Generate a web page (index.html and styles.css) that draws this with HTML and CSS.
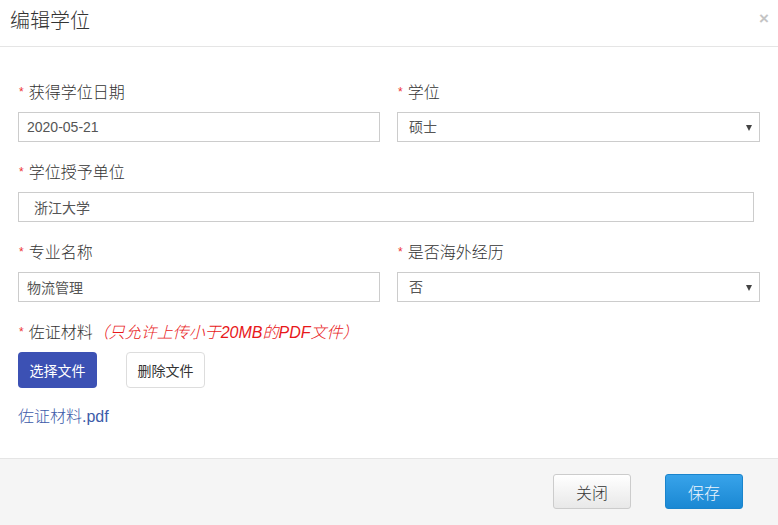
FILE: index.html
```html
<!DOCTYPE html>
<html lang="zh-CN">
<head>
    <meta charset="UTF-8">
    <title>编辑学位</title>
    <link rel="stylesheet" href="styles.css">
</head>
<body>
    <div class="modal">
        <div class="modal-header">
            <h3 class="modal-title">编辑学位</h3>
            <span class="close">&times;</span>
        </div>

        <div class="modal-body">
            <div class="row">
                <div class="field">
                    <label><span class="req">*</span>获得学位日期</label>
                    <input type="text" class="input" value="2020-05-21">
                </div>
                <div class="field">
                    <label><span class="req">*</span>学位</label>
                    <div class="select-wrap">
                        <select class="input select">
                            <option>硕士</option>
                            <option>学士</option>
                            <option>博士</option>
                        </select>
                    </div>
                </div>
            </div>

            <div class="field">
                <label><span class="req">*</span>学位授予单位</label>
                <input type="text" class="input wide" value="浙江大学">
            </div>

            <div class="row">
                <div class="field">
                    <label><span class="req">*</span>专业名称</label>
                    <input type="text" class="input" value="物流管理">
                </div>
                <div class="field">
                    <label><span class="req">*</span>是否海外经历</label>
                    <div class="select-wrap">
                        <select class="input select">
                            <option>否</option>
                            <option>是</option>
                        </select>
                    </div>
                </div>
            </div>

            <div class="field">
                <label><span class="req">*</span>佐证材料<span class="hint">（只允许上传小于20MB的PDF文件）</span></label>
                <div class="file-btns">
                    <button class="btn-choose">选择文件</button>
                    <button class="btn-delete">删除文件</button>
                </div>
            </div>

            <a class="file-link" href="#">佐证材料.pdf</a>
        </div>

        <div class="modal-footer">
            <button class="btn-close">关闭</button>
            <button class="btn-save">保存</button>
        </div>
    </div>
</body>
</html>
```

FILE: styles.css
```css
html, body {
    margin: 0;
    padding: 0;
    height: 525px;
    background-color: #fff;
    font-family: "Liberation Sans", "Noto Sans CJK SC", sans-serif;
    font-weight: 300;
    color: #333;
}
.modal {
    display: flex;
    flex-direction: column;
    height: 525px;
}
.modal-header {
    display: flex;
    justify-content: space-between;
    align-items: center;
    height: 46px;
    padding: 0 10px;
    border-bottom: 1px solid #e5e5e5;
}
.modal-title {
    margin: 0;
    font-size: 20px;
    font-weight: 300;
    line-height: 22px;
    color: #333;
    margin-top: -4px;
}
.close {
    color: #c4c4c4;
    font-size: 17px;
    font-weight: bold;
    margin-top: -8px;
    margin-right: -1px;
}
.modal-body {
    flex: 1;
    padding: 35px 18px 0 18px;
}
.row {
    display: grid;
    grid-template-columns: 362px 363px;
    column-gap: 17px;
}
.field {
    margin-bottom: 20px;
}
label {
    display: block;
    font-size: 16px;
    line-height: 20px;
    height: 20px;
    margin-bottom: 10px;
    color: #333;
    padding-left: 1px;
}
.req {
    color: #e33;
    font-size: 12px;
    margin-right: 5px;
    vertical-align: 2px;
}
.hint {
    color: #e8181a;
    font-style: italic;
}
.input {
    display: block;
    box-sizing: border-box;
    width: 100%;
    height: 30px;
    margin: 0;
    padding: 0 8px;
    border: 1px solid #ccc;
    background-color: #fff;
    color: #555;
    font-family: "Liberation Sans", "Noto Sans CJK SC", sans-serif;
    font-weight: 400;
    font-size: 14px;
    outline: none;
}
.input.wide {
    width: 736px;
    padding-left: 15px;
}
.select-wrap {
    position: relative;
}
.select {
    appearance: none;
    -webkit-appearance: none;
    padding-left: 11px;
    border-radius: 0;
}
.select-wrap::after {
    content: "";
    position: absolute;
    right: 8px;
    top: 13px;
    border-left: 3px solid transparent;
    border-right: 3px solid transparent;
    border-top: 6px solid #444;
}
.file-btns {
    display: flex;
    gap: 29px;
}
.btn-choose, .btn-delete {
    width: 79px;
    height: 36px;
    border-radius: 4px;
    font-family: "Liberation Sans", "Noto Sans CJK SC", sans-serif;
    font-weight: 400;
    font-size: 14px;
    cursor: pointer;
}
.btn-choose {
    background-color: #3c51b4;
    color: #fff;
    border: none;
}
.btn-delete {
    background-color: #fff;
    color: #333;
    border: 1px solid #ddd;
}
.file-link {
    display: inline-block;
    margin-top: -3px;
    font-size: 16px;
    line-height: 20px;
    color: #3d5ba9;
    text-decoration: none;
}
.modal-footer {
    display: flex;
    justify-content: flex-end;
    gap: 34px;
    padding: 15px 35px 16px 0;
    background-color: #f5f5f5;
    border-top: 1px solid #e5e5e5;
}
.btn-close, .btn-save {
    width: 78px;
    height: 35px;
    border-radius: 3px;
    font-family: "Liberation Sans", "Noto Sans CJK SC", sans-serif;
    font-weight: 300;
    font-size: 16px;
    cursor: pointer;
}
.btn-close {
    background: linear-gradient(#ffffff, #e8e8e8);
    border: 1px solid #ccc;
    color: #333;
}
.btn-save {
    background: linear-gradient(#38a3ea, #1a88d3);
    border: 1px solid #1a84cc;
    color: #eef6fd;
}
```
